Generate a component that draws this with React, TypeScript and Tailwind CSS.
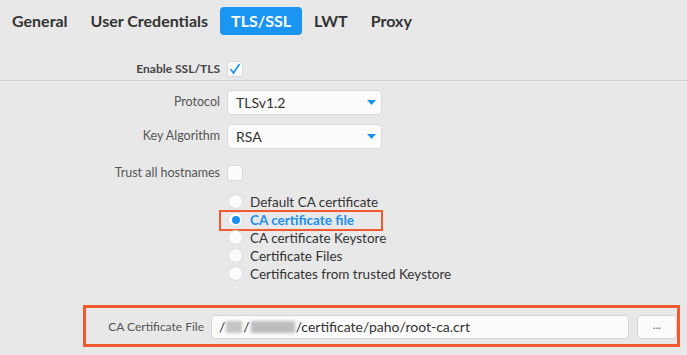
import React from 'react';

const tabs = ['General', 'User Credentials', 'TLS/SSL', 'LWT', 'Proxy'];

const radios = [
    'Default CA certificate',
    'CA certificate file',
    'CA certificate Keystore',
    'Certificate Files',
    'Certificates from trusted Keystore',
];

const Check = ({ checked }: { checked: boolean }) => (
    <span className="flex h-[16px] w-[16px] items-center justify-center rounded-[3px] border border-[#d9d9d9] bg-[#fbfbfb]">
        {checked && (
            <svg width="12" height="12" viewBox="0 0 12 12">
                <polyline points="1.5,6 4.5,10 10.5,1" fill="none" stroke="#1a93ee" strokeWidth="1.6" />
            </svg>
        )}
    </span>
);

const Select = ({ value }: { value: string }) => (
    <div className="flex h-[25px] w-[155px] items-center justify-between rounded-[4px] border border-[#dadada] bg-[#fbfbfb] pl-[8px] pr-[5px] text-[14px] text-[#333]">
        <span>{value}</span>
        <svg width="9" height="5" viewBox="0 0 9 5">
            <polygon points="0,0 9,0 4.5,5" fill="#1a93ee" />
        </svg>
    </div>
);

const Row = ({ label, children, bold }: { label: string; children: React.ReactNode; bold?: boolean }) => (
    <div className="flex items-center">
        <span
            className={`w-[221px] pr-[1px] text-right ${
                bold ? 'text-[12px] font-bold text-[#444]' : 'text-[12.5px] text-[#555]'
            }`}
        >
            {label}
        </span>
        <div className="ml-[6px]">{children}</div>
    </div>
);

export default function App() {
    return (
        <div className="h-[355px] w-[687px] overflow-hidden bg-[#e8e8e8] font-['Lato',sans-serif]">
            <div className="flex items-center gap-[1px] pl-[1px] pt-[7px]">
                {tabs.map((t) => (
                    <div
                        key={t}
                        className={`flex h-[28px] items-center rounded-[4px] px-[11px] text-[16px] font-bold ${
                            t === 'TLS/SSL' ? 'bg-[#1a95f2] text-white' : 'text-[#333]'
                        }`}
                    >
                        {t}
                    </div>
                ))}
            </div>

            <div className="mt-[25px] pb-[2px]">
                <Row label="Enable SSL/TLS" bold>
                    <Check checked />
                </Row>
            </div>
            <div className="h-[2px] border-t border-[#cdcdcd] bg-[#eeeeee]" />

            <div className="mt-[8px] flex flex-col">
                <Row label="Protocol">
                    <Select value="TLSv1.2" />
                </Row>
                <div className="mt-[9px]">
                    <Row label="Key Algorithm">
                        <Select value="RSA" />
                    </Row>
                </div>
                <div className="mt-[15px]">
                    <Row label="Trust all hostnames">
                        <Check checked={false} />
                    </Row>
                </div>

                <div className="ml-[228px] mt-[10px] flex flex-col">
                    {radios.map((r, i) => (
                        <div key={r} className="relative flex h-[18px] items-center">
                            <span className="flex h-[15px] w-[15px] items-center justify-center rounded-full border border-[#dcdcdc] bg-[#fbfbfb]">
                                {i === 1 && <span className="h-[8px] w-[8px] rounded-full bg-[#1a8ff0]" />}
                            </span>
                            <span
                                className={`ml-[7px] text-[13.5px] ${
                                    i === 1 ? 'font-bold text-[#1a8ff0]' : 'text-[#333]'
                                }`}
                            >
                                {r}
                            </span>
                            {i === 1 && (
                                <span className="absolute left-[-9px] top-[-1px] h-[21px] w-[164px] border-2 border-[#f05a2e]" />
                            )}
                        </div>
                    ))}
                </div>

                <div className="ml-[83px] mt-[22px] flex h-[42px] w-[597px] items-center overflow-hidden border-[3px] border-[#f05a2e] pt-[2px]">
                    <span className="w-[123px] text-right text-[12px] text-[#555]">CA Certificate File</span>
                    <div className="ml-[7px] flex h-[24px] w-[418px] shrink-0 items-center rounded-[4px] border border-[#d6d6d6] bg-[#fbfbfb] pl-[7px] text-[14px] text-[#333]">
                        <span>/</span>
                        <span className="mx-[1px] h-[12px] w-[16px] bg-[#c4c4c4] blur-[1.5px]" />
                        <span>/</span>
                        <span className="mx-[1px] h-[12px] w-[44px] bg-[#bdbdbd] blur-[1.5px]" />
                        <span>/certificate/paho/root-ca.crt</span>
                    </div>
                    <div className="ml-[8px] flex h-[24px] w-[40px] shrink-0 items-center justify-center rounded-[4px] border border-[#d6d6d6] bg-[#fbfbfb] pb-[4px] text-[11px] text-[#555]">
                        ...
                    </div>
                </div>
            </div>
        </div>
    );
}
